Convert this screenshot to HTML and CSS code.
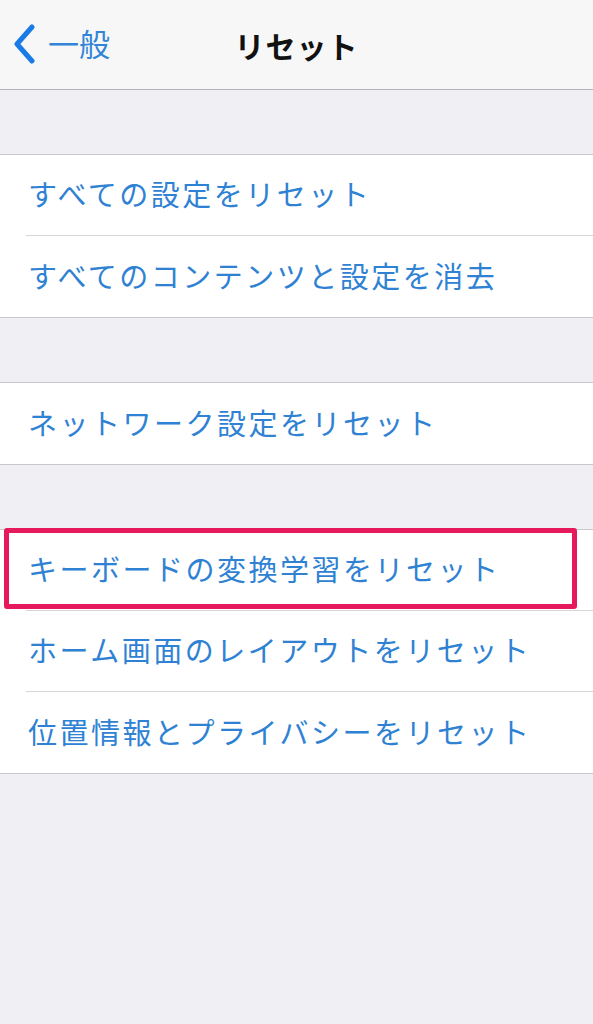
FILE: index.html
```html
<!DOCTYPE html>
<html lang="ja">
<head>
    <meta charset="UTF-8">
    <meta name="viewport" content="width=device-width, initial-scale=1.0">

    <title>リセット</title>

    <link rel="stylesheet" href="styles.css">

</head>

<body>

    <header class="nav-bar">
        <a class="back" href="#">
            <svg class="chevron" width="24" height="40" viewBox="0 0 24 40">
                <path d="M20 3 L5 20 L20 37" fill="none" stroke="#1a7ae6" stroke-width="5" stroke-linecap="round" stroke-linejoin="round"/>
            </svg>
            <span>一般</span>
        </a>
        <h1>リセット</h1>
    </header>

    <ul class="group">
        <li class="row">すべての設定をリセット</li>
        <li class="row">すべてのコンテンツと設定を消去</li>
    </ul>

    <ul class="group">
        <li class="row">ネットワーク設定をリセット</li>
    </ul>

    <ul class="group">
        <!-- highlighted item -->
        <li class="row marked">キーボードの変換学習をリセット</li>
        <li class="row">ホーム画面のレイアウトをリセット</li>
        <li class="row">位置情報とプライバシーをリセット</li>
    </ul>

</body>

</html>
```

FILE: styles.css
```css
body {
    margin: 0;
    background-color: #efeff4;
    font-family: "Noto Sans CJK JP", "Noto Sans", sans-serif;
    height: 1024px;
}

.nav-bar {
    height: 89px;
    background-color: #f7f7f7;
    border-bottom: 1px solid #b4b4b8;
    display: flex;
    align-items: center;
    justify-content: center;
    position: relative;
}

.nav-bar h1 {
    margin: 0;
    font-size: 30px;
    font-weight: 700;
    color: #111111;
    letter-spacing: 1px;
}

.back {
    position: absolute;
    left: 12px;
    top: 0;
    height: 89px;
    display: flex;
    align-items: center;
    gap: 12px;
    color: #3285d6;
    text-decoration: none;
    font-size: 31px;
}

.back span {
    margin-top: -4px;
}

.chevron {
    margin-top: -2px;
}

.group {
    list-style: none;
    margin: 64px 0 0;
    padding: 0 0 0 26px;
    background-color: #ffffff;
    border-top: 1px solid #c8c7cc;
    border-bottom: 1px solid #c8c7cc;
}

.row {
    height: 81px;
    display: flex;
    align-items: center;
    font-size: 29px;
    letter-spacing: 2.5px;
    color: #2f82d3;
    padding-left: 2px;
    padding-bottom: 4px;
    box-sizing: border-box;
    border-bottom: 1px solid #d6d6da;
    position: relative;
}

.row:last-child {
    border-bottom: none;
}

.marked::after {
    content: "";
    position: absolute;
    left: -22px;
    top: -2px;
    width: 563px;
    height: 71px;
    border: 5px solid #e5195b;
    border-radius: 3px;
}
```
